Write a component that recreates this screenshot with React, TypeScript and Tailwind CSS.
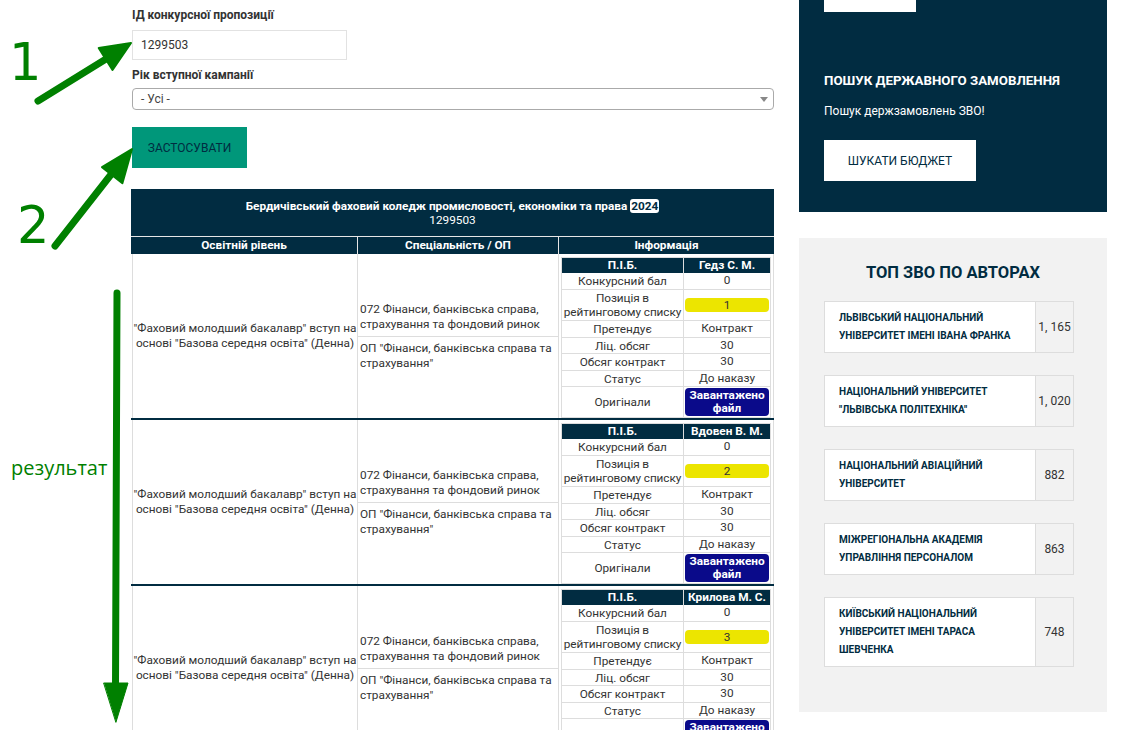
import React from "react";

type Rec = { name: string; pos: string };

const records: Rec[] = [
  { name: "Гедз С. М.", pos: "1" },
  { name: "Вдовен В. М.", pos: "2" },
  { name: "Крилова М. С.", pos: "3" },
];

const top = [
  { lines: ["Львівський національний", "університет імені Івана Франка"], n: "1, 165" },
  { lines: ["Національний університет", "\"Львівська політехніка\""], n: "1, 020" },
  { lines: ["Національний авіаційний", "університет"], n: "882" },
  { lines: ["Міжрегіональна академія", "управління персоналом"], n: "863" },
  { lines: ["Київський національний", "університет імені Тараса", "Шевченка"], n: "748" },
];

const InfoRow = ({ label, children, h }: { label: React.ReactNode; children: React.ReactNode; h: string }) => (
  <div className={`flex ${h} border-b border-[#ddd]`}>
    <div className="w-[122px] flex items-center justify-center text-center leading-[14px] whitespace-nowrap border-r border-[#ddd]">
      {label}
    </div>
    <div className="flex-1 flex items-center justify-center px-[1px] whitespace-nowrap">{children}</div>
  </div>
);

const RecordRow = ({ rec }: { rec: Rec }) => (
  <div className="grid grid-cols-[226px_201px_216px] h-[166px] border-b-2 border-[#012c41]">
    <div className="border-l border-[#ddd] ml-[1px] flex items-center justify-center text-center leading-[15px] whitespace-nowrap">
      <span>
        "Фаховий молодший бакалавр" вступ на
        <br />
        основі "Базова середня освіта" (Денна)
      </span>
    </div>
    <div className="border-l border-[#ddd] flex flex-col justify-center leading-[15px]">
      <div className="px-[2px] py-[4px] border-b border-[#ddd] whitespace-nowrap">
        072 Фінанси, банківська справа,
        <br />
        страхування та фондовий ринок
      </div>
      <div className="px-[2px] py-[4px] whitespace-nowrap">
        ОП "Фінанси, банківська справа та
        <br />
        страхування"
      </div>
    </div>
    <div className="border-l border-r border-[#ddd] pt-[3px] px-[2px]">
      <div className="border-l border-r border-t border-[#ddd] text-center">
        <div className="flex h-[15px] bg-[#012c41] text-white font-bold leading-[15px]">
          <div className="w-[122px] border-r border-[#ddd]">П.І.Б.</div>
          <div className="flex-1 whitespace-nowrap">{rec.name}</div>
        </div>
        <InfoRow h="h-[17px]" label="Конкурсний бал">0</InfoRow>
        <InfoRow
          h="h-[31px]"
          label={
            <span className="tracking-[-0.1px]">
              Позиція в
              <br />
              рейтинговому списку
            </span>
          }
        >
          <div className="w-full h-[14px] leading-[14px] rounded-[4px] bg-[#ece500] text-[#333]">{rec.pos}</div>
        </InfoRow>
        <InfoRow h="h-[17px]" label="Претендує">Контракт</InfoRow>
        <InfoRow h="h-[16px]" label="Ліц. обсяг">30</InfoRow>
        <InfoRow h="h-[17px]" label="Обсяг контракт">30</InfoRow>
        <InfoRow h="h-[16px]" label="Статус">До наказу</InfoRow>
        <InfoRow h="h-[31px]" label="Оригінали">
          <div className="w-full h-[28px] rounded-[4px] bg-[#0a0a8a] text-white font-bold leading-[13px] flex items-center justify-center">
            <span>
              Завантажено
              <br />
              файл
            </span>
          </div>
        </InfoRow>
      </div>
    </div>
  </div>
);

export default function App() {
  return (
    <div className="relative h-[730px] w-[1131px] overflow-hidden bg-white font-['Roboto',sans-serif] text-[12px] text-[#333]">
      <div className="flex pl-[131px] gap-[25px]">
        {/* main column */}
        <div className="w-[643px] pt-[8px]">
          <div className="ml-[1px] font-bold leading-[14px]">ІД конкурсної пропозиції</div>
          <div className="ml-[1px] mt-[8px] w-[215px] h-[30px] border border-[#e2e2e2] px-[8px] flex items-center">1299503</div>
          <div className="ml-[1px] mt-[8px] font-bold leading-[14px]">Рік вступної кампанії</div>
          <div className="ml-[1px] mt-[6px] w-[642px] h-[22px] border border-[#aaa] rounded-[4px] pl-[8px] pr-[5px] flex items-center justify-between text-[#444]">
            <span>- Усі -</span>
            <span className="w-0 h-0 border-l-[4px] border-r-[4px] border-t-[5px] border-l-transparent border-r-transparent border-t-[#888]" />
          </div>
          <button className="ml-[1px] mt-[17px] w-[115px] h-[41px] bg-[#00977a] text-[#012c41] flex items-center justify-center">
            ЗАСТОСУВАТИ
          </button>

          <div className="mt-[21px] text-[11.8px]">
            <div className="h-[48px] bg-[#012c41] text-white text-center pt-[10px] leading-[14px] border-b border-[#e6e6e6]">
              <div>
                <span className="font-bold">Бердичівський фаховий коледж промисловості, економіки та права </span>
                <span className="font-bold bg-white text-[#012c41] rounded-[3px] px-[1px]">2024</span>
              </div>
              <div>1299503</div>
            </div>
            <div className="grid grid-cols-[226px_201px_216px] h-[17px] bg-[#012c41] text-white font-bold text-center leading-[17px]">
              <div>Освітній рівень</div>
              <div className="border-l border-[#e6e6e6]">Спеціальність / ОП</div>
              <div className="border-l border-[#e6e6e6]">Інформація</div>
            </div>
            {records.map((r) => (
              <RecordRow key={r.name} rec={r} />
            ))}
          </div>
        </div>

        {/* sidebar */}
        <div className="w-[308px]">
          <div className="h-[212px] bg-[#012c41] px-[25px] text-white">
            <div className="h-[12px] w-[92px] bg-white" />
            <div className="mt-[61px] text-[13.3px] font-bold leading-[16px]">ПОШУК ДЕРЖАВНОГО ЗАМОВЛЕННЯ</div>
            <div className="mt-[15px] leading-[14px]">Пошук держзамовлень ЗВО!</div>
            <button className="mt-[22px] w-[152px] h-[41px] bg-white text-[#012c41] flex items-center justify-center">
              ШУКАТИ БЮДЖЕТ
            </button>
          </div>
          <div className="mt-[26px] h-[474px] bg-[#f2f2f2] pt-[25px] px-[25px]">
            <div className="text-center text-[16.5px] font-bold leading-[20px] text-[#012c41]">ТОП ЗВО ПО АВТОРАХ</div>
            <div className="mt-[18px] flex flex-col gap-[22px]">
              {top.map((t) => (
                <div key={t.n} className="flex w-[250px] border border-[#ddd]">
                  <div className="w-[210px] bg-white px-[14px] py-[7px] text-[10px] font-bold uppercase leading-[18px] text-[#012c41]">
                    {t.lines.map((l) => (
                      <div key={l}>{l}</div>
                    ))}
                  </div>
                  <div className="flex-1 border-l border-[#ddd] bg-[#f2f2f2] flex items-center justify-center">{t.n}</div>
                </div>
              ))}
            </div>
          </div>
        </div>
      </div>

      {/* annotations */}
      <svg className="absolute left-0 top-0 pointer-events-none" width="140" height="730" viewBox="0 0 140 730">
        <g fill="#008000" stroke="#008000" strokeLinecap="round" strokeLinejoin="round">
          <line x1="38" y1="101" x2="106" y2="59" strokeWidth="7" />
          <polygon points="131,43 112.5,70 98.7,48" strokeWidth="2" />
          <line x1="55" y1="246" x2="113" y2="172" strokeWidth="7" />
          <polygon points="132,149 122.4,183.2 102,167.2" strokeWidth="2" />
          <line x1="117" y1="293" x2="115.5" y2="688" strokeWidth="7" />
          <polygon points="104,683 128,683 116,722" strokeWidth="1" />
        </g>
      </svg>
      <div className="absolute left-[9px] top-[33px] font-['DejaVu_Sans',sans-serif] text-[51px] leading-[60px] text-[#008000]">1</div>
      <div className="absolute left-[17px] top-[196px] font-['DejaVu_Sans',sans-serif] text-[51px] leading-[60px] text-[#008000]">2</div>
      <div className="absolute left-[11px] top-[455px] font-['Open_Sans',sans-serif] text-[20px] leading-[26px] text-[#008000]">результат</div>
    </div>
  );
}
